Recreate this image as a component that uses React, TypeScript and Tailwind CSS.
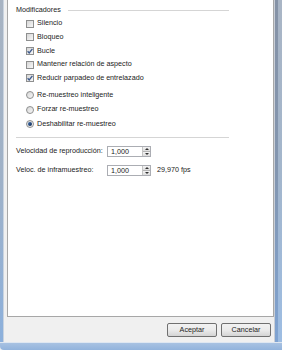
const Check = ({ checked, label }: { checked?: boolean; label: string }) => (
  <div className="flex items-center h-[13.6px] pl-[10px] gap-[3px]">
    <span className="relative w-[8px] h-[8px] border border-[#8e8f8f] bg-linear-to-br from-[#d6d6d6] to-[#f7f7f7] shrink-0">
      {checked && (
        <svg viewBox="0 0 8 8" className="absolute -left-px -top-px w-[8px] h-[8px]">
          <path d="M1.6 4.2 L3.2 5.9 L6.4 1.8" fill="none" stroke="#3d5a8c" strokeWidth="1.3" />
        </svg>
      )}
    </span>
    <span>{label}</span>
  </div>
);

const Radio = ({ selected, label }: { selected?: boolean; label: string }) => (
  <div className="flex items-center h-[14.5px] pl-[10px] gap-[3px]">
    <span className="w-[8px] h-[8px] rounded-full border border-[#8e8f8f] bg-linear-to-br from-[#d6d6d6] to-[#f7f7f7] flex items-center justify-center shrink-0">
      {selected && <span className="w-[4px] h-[4px] rounded-full bg-linear-to-br from-[#3c6fb3] to-[#13294d]" />}
    </span>
    <span>{label}</span>
  </div>
);

const Spinner = ({ value }: { value: string }) => (
  <div className="flex h-[11px] w-[44px] border border-[#abadb3] bg-white">
    <div className="flex-1 pl-[3px] leading-[9px]">{value}</div>
    <div className="w-[8px] flex flex-col border-l border-[#c4c4c4]">
      <div className="flex-1 bg-linear-to-b from-[#f3f3f3] to-[#dedede] border-b border-[#b5b5b5] flex items-center justify-center">
        <span className="w-0 h-0 border-x-[2px] border-x-transparent border-b-[2px] border-b-[#333]" />
      </div>
      <div className="flex-1 bg-linear-to-b from-[#f3f3f3] to-[#dedede] flex items-center justify-center">
        <span className="w-0 h-0 border-x-[2px] border-x-transparent border-t-[2px] border-t-[#333]" />
      </div>
    </div>
  </div>
);

const Button = ({ label }: { label: string }) => (
  <button className="w-[50px] h-[14px] rounded-[2px] border border-[#707070] bg-linear-to-b from-[#f2f2f2] via-[#ebebeb] to-[#d4d4d4] text-[#222] leading-[12px]">
    {label}
  </button>
);

export default function App() {
  return (
    <div className="w-[282px] h-[350px] flex flex-col bg-[#f0f0f0] font-['Liberation_Sans',sans-serif] text-[7.2px] text-[#222] overflow-hidden">
      <div className="flex flex-1 min-h-0">
        <div className="w-[4px] bg-linear-to-b from-[#a7b3c2] via-[#9fb1c7] to-[#8cb0dc] border-r border-[#c9d3df]" />
        <div className="flex-1 flex flex-col pl-[3px]">
          <div className="flex-1 bg-white border-x border-b border-[#a7a7a7] pt-[5px] pl-[8px]">
            <div className="w-[213px]">
              <div className="flex items-center h-[10px] gap-[7px]">
                <span>Modificadores</span>
                <span className="flex-1 h-px bg-[#d5d5d5]" />
              </div>
              <div className="mt-[2px]">
                <Check label="Silencio" />
                <Check label="Bloqueo" />
                <Check checked label="Bucle" />
                <Check label="Mantener relación de aspecto" />
                <Check checked label="Reducir parpadeo de entrelazado" />
              </div>
              <div className="mt-[3px]">
                <Radio label="Re-muestreo inteligente" />
                <Radio label="Forzar re-muestreo" />
                <Radio selected label="Deshabilitar re-muestreo" />
              </div>
              <div className="mt-[5.5px] h-px bg-[#d5d5d5]" />
              <div className="mt-[8px] flex items-center">
                <span className="w-[91px]">Velocidad de reproducción:</span>
                <Spinner value="1,000" />
              </div>
              <div className="mt-[8px] flex items-center">
                <span className="w-[91px]">Veloc. de inframuestreo:</span>
                <Spinner value="1,000" />
                <span className="ml-[6px]">29,970 fps</span>
              </div>
            </div>
          </div>
          <div className="h-[25px] flex justify-end gap-[4px] pt-[6px] pr-[3px]">
            <Button label="Aceptar" />
            <Button label="Cancelar" />
          </div>
        </div>
        <div className="w-[8px] flex">
          <div className="w-px bg-[#c9ced6]" />
          <div className="w-[3px] bg-linear-to-b from-[#8592a6] via-[#8396b0] to-[#7fa3d2]" />
          <div className="flex-1 bg-linear-to-b from-[#a9b5c5] via-[#a3b6cc] to-[#9dbde3]" />
        </div>
      </div>
      <div className="h-[8px] flex flex-col">
        <div className="h-px bg-[#dfe7f1]" />
        <div className="flex-1 bg-linear-to-b from-[#a8c2e2] to-[#92b3dc] rounded-bl-[4px]" />
      </div>
    </div>
  );
}
